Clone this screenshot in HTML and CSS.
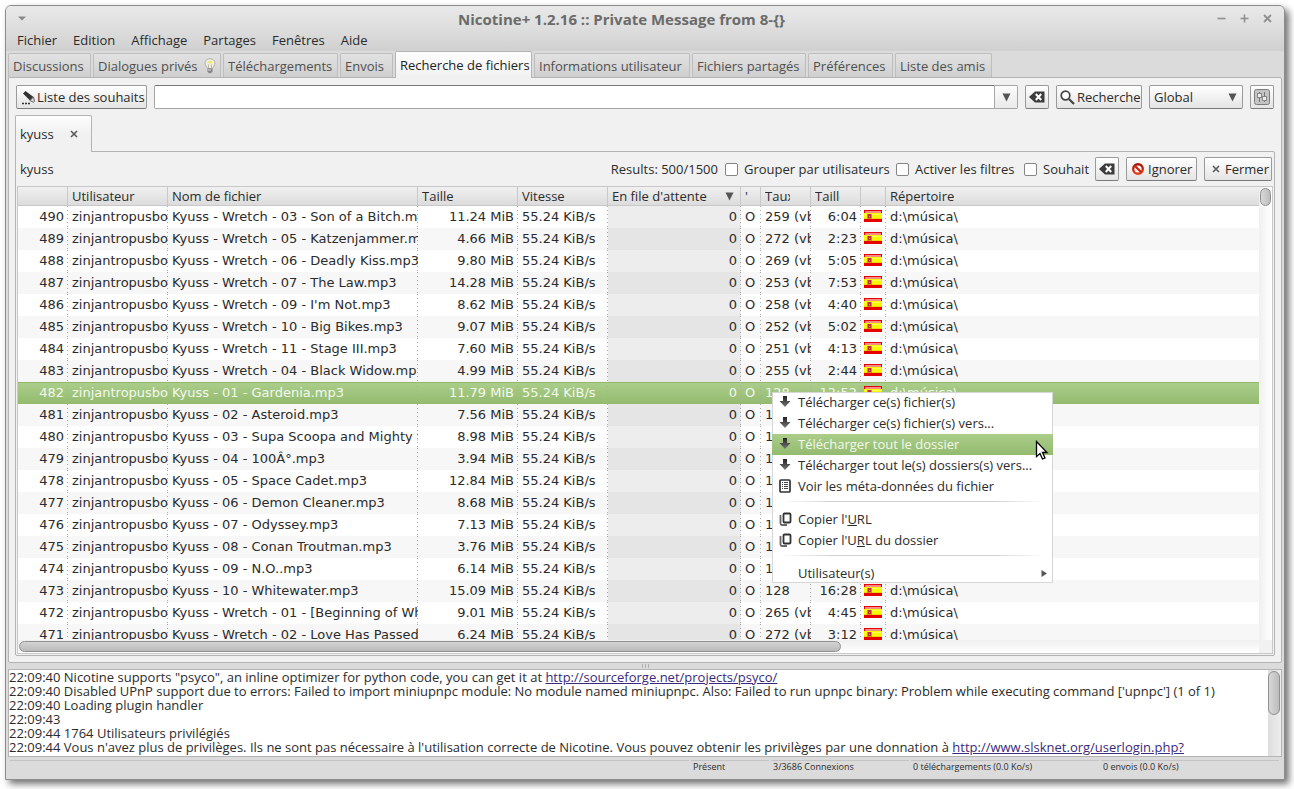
FILE: index.html
```html
<!DOCTYPE html>
<html lang="fr">
<head>
<meta charset="utf-8">
<title>Nicotine+ 1.2.16</title>
<link rel="stylesheet" href="styles.css">
</head>
<body>
<svg width="0" height="0" class="defs" aria-hidden="true">
  <defs>
    <linearGradient id="g-dark" x1="0" y1="0" x2="0" y2="1"><stop offset="0" stop-color="#222"/><stop offset="1" stop-color="#777"/></linearGradient>
    <linearGradient id="g-red" x1="0" y1="0" x2="0" y2="1"><stop offset="0" stop-color="#a80f05"/><stop offset="1" stop-color="#e8401c"/></linearGradient>
    <symbol id="flag" viewBox="0 0 18 12">
      <rect width="18" height="12" fill="#e60000"/><rect x="1" y="1" width="16" height="2" fill="#f58a8a"/>
      <rect y="3" width="18" height="6" fill="#f8f800"/><rect x="1" y="4" width="16" height="1" fill="#ffff4d"/><rect y="8" width="18" height="1" fill="#e8d800"/>
      <rect x="3" y="4" width="5" height="5" fill="#d8862a"/><rect x="4" y="4" width="3" height="4" fill="#c03040"/><rect x="5" y="6" width="1" height="1" fill="#99a0c8"/>
    </symbol>
    <symbol id="arrow" viewBox="0 0 12 12"><path d="M4 0h4v5h3.500L6 11 .5 5H4z" fill="url(#g-dark)"/></symbol>
    <symbol id="copy" viewBox="0 0 13 14"><rect x="4.500" y="1.500" width="7" height="9" rx="1" fill="#fff" stroke="#333" stroke-width="1.800"/><path d="M1.500 3v8.500a1.500 1.500 0 0 0 1.500 1.500h5" fill="none" stroke="#666" stroke-width="1.800"/></symbol>
    <symbol id="erase" viewBox="0 0 16 12"><path d="M0 6 6 .5h9.500v11H6z" fill="#3c3c3c"/><path d="M6.800 3l5.400 6M12.200 3l-5.400 6" stroke="#fff" stroke-width="2"/></symbol>
    <symbol id="down" viewBox="0 0 9 9"><path d="M.5.5h8l-4 8z" fill="#555"/></symbol>
    <symbol id="cross" viewBox="0 0 8 8"><path d="M1 1l6 6M7 1 1 7" stroke="#5a5a5a" stroke-width="1.600"/></symbol>
  </defs>
</svg>

<div class="window">
  <header class="titlebar">
    <svg class="win-menu" width="8" height="5" viewBox="0 0 8 5"><path d="M0 .5h8L4 4.500z" fill="#8a8a8a"/></svg>
    <h1 class="title">Nicotine+ 1.2.16 :: Private Message from 8-{}</h1>
    <div class="win-controls">
      <svg width="9" height="9" viewBox="0 0 9 9"><path d="M.5 4.500h8" stroke="#8f8f8f" stroke-width="1.600"/></svg>
      <svg width="9" height="9" viewBox="0 0 9 9"><path d="M.5 4.500h8M4.500.5v8" stroke="#8f8f8f" stroke-width="1.600"/></svg>
      <svg width="9" height="9" viewBox="0 0 9 9"><path d="M1 1l7 7M8 1 1 8" stroke="#8f8f8f" stroke-width="1.800"/></svg>
    </div>
  </header>

  <nav class="menubar">
    <button>Fichier</button><button>Edition</button><button>Affichage</button><button>Partages</button><button>Fenêtres</button><button>Aide</button>
  </nav>

  <div class="tabs" role="tablist">
    <button class="tab t-disc" role="tab">Discussions</button>
    <button class="tab t-priv" role="tab">Dialogues privés
      <svg width="12" height="16" viewBox="0 0 12 16"><path d="M6 .7C3 .7 1 2.800 1 5.300c0 2.200 2 3.500 2.500 5.200h5C9 8.800 11 7.500 11 5.300 11 2.800 9 .7 6 .7z" fill="#efeed8" stroke="#a5a59c" stroke-width=".8"/><path d="M4 4c1-1.500 3-1.500 4 0L6.500 5.500h-1z" fill="#f3e34e"/><path d="M4.500 6.500v4M7.500 6.500v4" stroke="#aaa" stroke-width=".8"/><path d="M3.500 10.500h5V14L6 15.500 3.500 14z" fill="#858585"/><path d="M4 12h3" stroke="#ddd"/></svg>
    </button>
    <button class="tab t-tele" role="tab">Téléchargements</button>
    <button class="tab t-env" role="tab">Envois</button>
    <button class="tab t-rech active" role="tab" aria-selected="true">Recherche de fichiers</button>
    <button class="tab t-info" role="tab">Informations utilisateur</button>
    <button class="tab t-part" role="tab">Fichiers partagés</button>
    <button class="tab t-pref" role="tab">Préférences</button>
    <button class="tab t-amis" role="tab">Liste des amis</button>
  </div>

  <main class="notebook">
    <form class="searchbar">
      <button type="button" class="btn wish">
        <svg width="15" height="15" viewBox="0 0 15 15"><path d="M2 3.500 4.500 1l8 6-3.500 3.500z" fill="#333"/><path d="M9 10.500 12.500 7l1 4.500-1 .8z" fill="#ddd" stroke="#555" stroke-width=".9"/><path d="M1 13.500h8" stroke="#333" stroke-width="1.400" stroke-dasharray="2 1"/></svg>
        Liste des souhaits</button>
      <div class="combo">
        <input type="text" aria-label="Recherche de fichiers">
        <button type="button" aria-label="Historique"><svg width="9" height="9"><use href="#down"/></svg></button>
      </div>
      <button type="button" class="btn icon" aria-label="Effacer"><svg width="16" height="12"><use href="#erase"/></svg></button>
      <button type="button" class="btn search">
        <svg width="15" height="15" viewBox="0 0 15 15"><circle cx="5.500" cy="5.500" r="4.300" fill="#fff" stroke="#444" stroke-width="1.700"/><path d="M9 9l5 5" stroke="#444" stroke-width="2.200"/></svg>
        Recherche</button>
      <div class="selectbox">
        <select aria-label="Portée"><option>Global</option></select>
        <svg width="9" height="9"><use href="#down"/></svg>
      </div>
      <button type="button" class="btn icon" aria-label="Options">
        <svg width="16" height="16" viewBox="0 0 16 16"><rect x=".5" y=".5" width="15" height="15" rx="2" fill="#c4c4c4" stroke="#7c7c7c"/><path d="M5.500 3v10M10.500 3v10" stroke="#777"/><rect x="3.500" y="4.500" width="4" height="4" fill="#eee" stroke="#888"/><rect x="8.500" y="7.500" width="4" height="4" fill="#eee" stroke="#888"/></svg>
      </button>
    </form>

    <div class="subtab">kyuss <button aria-label="Fermer l'onglet"><svg width="8" height="8"><use href="#cross"/></svg></button></div>

    <section class="panel">
      <div class="filters">
        <span class="term">kyuss</span>
        <span>Results: 500/1500</span>
        <label class="f-group"><input type="checkbox">Grouper par utilisateurs</label>
        <label class="f-filter"><input type="checkbox">Activer les filtres</label>
        <label class="f-wish"><input type="checkbox">Souhait</label>
        <button class="btn icon" aria-label="Effacer"><svg width="16" height="12"><use href="#erase"/></svg></button>
        <button class="btn ignore"><svg width="12" height="12" viewBox="0 0 12 12"><circle cx="6" cy="6" r="4.800" fill="#fff" stroke="url(#g-red)" stroke-width="2.400"/><path d="M2.500 2.500l7 7" stroke="#c92812" stroke-width="2.400"/></svg>Ignorer</button>
        <button class="btn close"><svg width="8" height="8"><use href="#cross"/></svg>Fermer</button>
      </div>

      <div class="results">
        <div class="viewport">
          <table>
            <colgroup><col class="c50"><col class="c100"><col class="c250"><col class="c100"><col class="c90"><col class="c133"><col class="c20"><col class="c50"><col class="c50"><col class="c25"><col></colgroup>
            <thead><tr><th></th><th>Utilisateur</th><th>Nom de fichier</th><th>Taille</th><th>Vitesse</th><th><div class="sort">En file d'attente<svg width="9" height="9"><use href="#down"/></svg></div></th><th>'</th><th><div class="cut">Taux</div></th><th><div class="cut">Taille</div></th><th></th><th>Répertoire</th></tr></thead>
            <tbody>
              <tr><td>490</td><td>zinjantropusbo</td><td>Kyuss - Wretch - 03 - Son of a Bitch.m</td><td>11.24 MiB</td><td>55.24 KiB/s</td><td>0</td><td>O</td><td>259 (vb</td><td>6:04</td><td><svg><use href="#flag"/></svg></td><td>d:\música\</td></tr>
              <tr><td>489</td><td>zinjantropusbo</td><td>Kyuss - Wretch - 05 - Katzenjammer.m</td><td>4.66 MiB</td><td>55.24 KiB/s</td><td>0</td><td>O</td><td>272 (vb</td><td>2:23</td><td><svg><use href="#flag"/></svg></td><td>d:\música\</td></tr>
              <tr><td>488</td><td>zinjantropusbo</td><td>Kyuss - Wretch - 06 - Deadly Kiss.mp3</td><td>9.80 MiB</td><td>55.24 KiB/s</td><td>0</td><td>O</td><td>269 (vb</td><td>5:05</td><td><svg><use href="#flag"/></svg></td><td>d:\música\</td></tr>
              <tr><td>487</td><td>zinjantropusbo</td><td>Kyuss - Wretch - 07 - The Law.mp3</td><td>14.28 MiB</td><td>55.24 KiB/s</td><td>0</td><td>O</td><td>253 (vb</td><td>7:53</td><td><svg><use href="#flag"/></svg></td><td>d:\música\</td></tr>
              <tr><td>486</td><td>zinjantropusbo</td><td>Kyuss - Wretch - 09 - I'm Not.mp3</td><td>8.62 MiB</td><td>55.24 KiB/s</td><td>0</td><td>O</td><td>258 (vb</td><td>4:40</td><td><svg><use href="#flag"/></svg></td><td>d:\música\</td></tr>
              <tr><td>485</td><td>zinjantropusbo</td><td>Kyuss - Wretch - 10 - Big Bikes.mp3</td><td>9.07 MiB</td><td>55.24 KiB/s</td><td>0</td><td>O</td><td>252 (vb</td><td>5:02</td><td><svg><use href="#flag"/></svg></td><td>d:\música\</td></tr>
              <tr><td>484</td><td>zinjantropusbo</td><td>Kyuss - Wretch - 11 - Stage III.mp3</td><td>7.60 MiB</td><td>55.24 KiB/s</td><td>0</td><td>O</td><td>251 (vb</td><td>4:13</td><td><svg><use href="#flag"/></svg></td><td>d:\música\</td></tr>
              <tr><td>483</td><td>zinjantropusbo</td><td>Kyuss - Wretch - 04 - Black Widow.mp</td><td>4.99 MiB</td><td>55.24 KiB/s</td><td>0</td><td>O</td><td>255 (vb</td><td>2:44</td><td><svg><use href="#flag"/></svg></td><td>d:\música\</td></tr>
              <tr class="selected"><td>482</td><td>zinjantropusbo</td><td>Kyuss - 01 - Gardenia.mp3</td><td>11.79 MiB</td><td>55.24 KiB/s</td><td>0</td><td>O</td><td>128</td><td>12:52</td><td><svg><use href="#flag"/></svg></td><td>d:\música\</td></tr>
              <tr><td>481</td><td>zinjantropusbo</td><td>Kyuss - 02 - Asteroid.mp3</td><td>7.56 MiB</td><td>55.24 KiB/s</td><td>0</td><td>O</td><td>128</td><td></td><td></td><td></td></tr>
              <tr><td>480</td><td>zinjantropusbo</td><td>Kyuss - 03 - Supa Scoopa and Mighty S</td><td>8.98 MiB</td><td>55.24 KiB/s</td><td>0</td><td>O</td><td>128</td><td></td><td></td><td></td></tr>
              <tr><td>479</td><td>zinjantropusbo</td><td>Kyuss - 04 - 100Â°.mp3</td><td>3.94 MiB</td><td>55.24 KiB/s</td><td>0</td><td>O</td><td>128</td><td></td><td></td><td></td></tr>
              <tr><td>478</td><td>zinjantropusbo</td><td>Kyuss - 05 - Space Cadet.mp3</td><td>12.84 MiB</td><td>55.24 KiB/s</td><td>0</td><td>O</td><td>128</td><td></td><td></td><td></td></tr>
              <tr><td>477</td><td>zinjantropusbo</td><td>Kyuss - 06 - Demon Cleaner.mp3</td><td>8.68 MiB</td><td>55.24 KiB/s</td><td>0</td><td>O</td><td>128</td><td></td><td></td><td></td></tr>
              <tr><td>476</td><td>zinjantropusbo</td><td>Kyuss - 07 - Odyssey.mp3</td><td>7.13 MiB</td><td>55.24 KiB/s</td><td>0</td><td>O</td><td>128</td><td></td><td></td><td></td></tr>
              <tr><td>475</td><td>zinjantropusbo</td><td>Kyuss - 08 - Conan Troutman.mp3</td><td>3.76 MiB</td><td>55.24 KiB/s</td><td>0</td><td>O</td><td>128</td><td></td><td></td><td></td></tr>
              <tr><td>474</td><td>zinjantropusbo</td><td>Kyuss - 09 - N.O..mp3</td><td>6.14 MiB</td><td>55.24 KiB/s</td><td>0</td><td>O</td><td>128</td><td></td><td></td><td></td></tr>
              <tr><td>473</td><td>zinjantropusbo</td><td>Kyuss - 10 - Whitewater.mp3</td><td>15.09 MiB</td><td>55.24 KiB/s</td><td>0</td><td>O</td><td>128</td><td>16:28</td><td><svg><use href="#flag"/></svg></td><td>d:\música\</td></tr>
              <tr><td>472</td><td>zinjantropusbo</td><td>Kyuss - Wretch - 01 - [Beginning of Wh</td><td>9.01 MiB</td><td>55.24 KiB/s</td><td>0</td><td>O</td><td>265 (vb</td><td>4:45</td><td><svg><use href="#flag"/></svg></td><td>d:\música\</td></tr>
              <tr><td>471</td><td>zinjantropusbo</td><td>Kyuss - Wretch - 02 - Love Has Passed</td><td>6.24 MiB</td><td>55.24 KiB/s</td><td>0</td><td>O</td><td>272 (vb</td><td>3:12</td><td><svg><use href="#flag"/></svg></td><td>d:\música\</td></tr>
            </tbody>
          </table>
        </div>
        <div class="vscroll"><div class="thumb"></div></div>
        <div class="hscroll"><div class="thumb"></div></div>
        <div class="corner"></div>
      </div>
    </section>
  </main>

  <div class="pane-handle"><i></i><i></i><i></i></div>

  <section class="log">
    <div class="lines">
      <p>22:09:40 Nicotine supports "psyco", an inline optimizer for python code, you can get it at <a href="http://sourceforge.net/projects/psyco/">http://sourceforge.net/projects/psyco/</a></p>
      <p>22:09:40 Disabled UPnP support due to errors: Failed to import miniupnpc module: No module named miniupnpc. Also: Failed to run upnpc binary: Problem while executing command ['upnpc'] (1 of 1)</p>
      <p>22:09:40 Loading plugin handler</p>
      <p>22:09:43</p>
      <p>22:09:44 1764 Utilisateurs privilégiés</p>
      <p>22:09:44 Vous n'avez plus de privilèges. Ils ne sont pas nécessaire à l'utilisation correcte de Nicotine. Vous pouvez obtenir les privilèges par une donnation à <a href="http://www.slsknet.org/userlogin.php?">http://www.slsknet.org/userlogin.php?</a></p>
    </div>
    <div class="log-scroll"><div class="thumb"></div></div>
  </section>

  <footer class="status"><span></span><span>Présent</span><span>3/3686 Connexions</span><span>0 téléchargements (0.0 Ko/s)</span><span>0 envois (0.0 Ko/s)</span></footer>

  <div class="context" role="menu">
    <button role="menuitem"><svg width="12" height="12"><use href="#arrow"/></svg>Télécharger ce(s) fichier(s)</button>
    <button role="menuitem"><svg width="12" height="12"><use href="#arrow"/></svg>Télécharger ce(s) fichier(s) vers...</button>
    <button role="menuitem" class="hover"><svg width="12" height="12"><use href="#arrow"/></svg>Télécharger tout le dossier</button>
    <button role="menuitem"><svg width="12" height="12"><use href="#arrow"/></svg>Télécharger tout le(s) dossiers(s) vers...</button>
    <button role="menuitem"><svg width="12" height="14" viewBox="0 0 12 14"><rect x="1" y="1" width="10" height="12" rx="1" fill="#fff" stroke="#333" stroke-width="1.700"/><path d="M3 3.500h1m1 0h4M3 5.500h1m1 0h4M3 7.500h1m1 0h4M3 9.500h1m1 0h4" stroke="#444"/></svg>Voir les méta-données du fichier</button>
    <hr>
    <button role="menuitem"><svg width="13" height="14"><use href="#copy"/></svg><span>Copier l'<u>U</u>RL</span></button>
    <button role="menuitem"><svg width="13" height="14"><use href="#copy"/></svg><span>Copier l'U<u>R</u>L du dossier</span></button>
    <hr>
    <button role="menuitem" class="sub">Utilisateur(s)<svg class="more" width="6" height="7" viewBox="0 0 6 7"><path d="M.5 0 6 3.500.5 7z" fill="#555"/></svg></button>
  </div>
  <svg class="pointer" width="14" height="21" viewBox="0 0 14 21"><path d="M1.500 1.500v15l3.500-3 2.500 5.500 2.500-1-2.500-5.500h4.500z" fill="#fff" stroke="#000" stroke-width="1.300"/></svg>
</div>
</body>
</html>
```
FILE: styles.css
```css
* { box-sizing: border-box; }

body {
  margin: 0;
  height: 100vh;
  padding: 5px 9px 9px 5px;
  background: #fff;
  color: #2b2b2b;
  font: 13px/16px "Open Sans", "Noto Sans", sans-serif;
  white-space: nowrap;
}
button, input, select { font: inherit; color: inherit; margin: 0; }
button { padding: 0; border: 0; background: none; }
svg { flex: none; }
.defs { position: absolute; }

.window {
  position: relative;
  display: flex;
  flex-direction: column;
  height: 100%;
  border: 1px solid #8c8c8c;
  border-radius: 6px 6px 0 0;
  background: #dbdbdb;
  box-shadow: 4px 4px 7px rgba(0, 0, 0, .55);
}

/* Title and menus */
.titlebar {
  display: flex;
  align-items: center;
  height: 25px;
  padding: 0 12px;
  border-radius: 5px 5px 0 0;
  background: linear-gradient(#e9e9e9, #dcdcdc);
}
.title {
  flex: 1;
  margin: 0;
  text-align: center;
  font-size: 15px;
  line-height: 20px;
  color: #6b6b6b;
}
.win-controls { display: flex; gap: 14px; }
.menubar {
  display: flex;
  gap: 16px;
  height: 20px;
  padding: 0 11px 2px;
  background: linear-gradient(#dcdcdc, #d0d0d0);
}

/* Main tabs */
.tabs {
  display: flex;
  align-items: flex-end;
  gap: 2px;
  height: 26px;
  padding: 0 2px;
}
.tab {
  display: flex;
  align-items: center;
  justify-content: space-between;
  height: 24px;
  padding: 0 4px;
  border: 1px solid #bdbdbd;
  border-bottom: 0;
  border-radius: 2px 2px 0 0;
  background: linear-gradient(#e2e2e2, #cfcfcf);
  color: #505050;
}
.tab.active {
  position: relative;
  z-index: 1;
  height: 27px;
  margin-bottom: -1px;
  padding-right: 0;
  border-color: #b4b4b4;
  background: linear-gradient(#fdfdfd, #f1f1f1);
  color: #222;
}
.t-disc { width: 83px; }
.t-priv { width: 128px; }
.t-tele { width: 115px; }
.t-env { width: 53px; }
.t-rech { width: 137px; }
.t-info { width: 156px; }
.t-part { width: 114px; }
.t-pref { width: 85px; }
.t-amis { width: 97px; }

.notebook {
  flex: 1;
  min-height: 0;
  display: flex;
  flex-direction: column;
  margin: 0 2px;
  padding: 7px 6px 6px;
  border: 1px solid #b4b4b4;
  border-radius: 0 2px 2px 2px;
  background: #f1f1f1;
}

/* Buttons and fields */
.btn {
  display: flex;
  align-items: center;
  height: 24px;
  gap: 4px;
  padding: 0 5px;
  border: 1px solid #9a9a9a;
  border-bottom-color: #7c7c7c;
  border-radius: 2px;
  background: linear-gradient(#fff, #e4e4e4);
}
.btn.icon { width: 24px; padding: 0; justify-content: center; }
.wish { width: 131px; gap: 1px; padding: 0 4px; }
.search { width: 86px; gap: 2px; padding: 0 3px; }
.ignore { width: 71px; }
.close { width: 68px; gap: 5px; padding: 0 7px; }
.searchbar { display: flex; gap: 7px; padding: 0 1px; }
.combo { flex: 1; display: flex; height: 24px; }
.combo input {
  flex: 1;
  min-width: 0;
  border: 1px solid #a6a6a6;
  border-top-color: #777;
  border-radius: 2px 0 0 2px;
  background: #fff;
  padding: 0 5px;
}
.combo button {
  display: grid;
  place-items: center;
  width: 23px;
  border: 1px solid #a6a6a6;
  border-left: 0;
  border-radius: 0 2px 2px 0;
  background: linear-gradient(#fcfcfc, #eaeaea);
}
.selectbox { display: grid; width: 94px; height: 24px; align-items: center; }
.selectbox > * { grid-area: 1 / 1; }
.selectbox select {
  appearance: none;
  width: 100%;
  height: 24px;
  padding: 0 4px;
  border: 1px solid #9a9a9a;
  border-bottom-color: #7c7c7c;
  border-radius: 2px;
  background: linear-gradient(#fff, #e4e4e4);
}
.selectbox svg { justify-self: end; margin-right: 6px; pointer-events: none; }

/* Search result tab */
.subtab {
  position: relative;
  z-index: 1;
  align-self: flex-start;
  display: flex;
  align-items: center;
  justify-content: space-between;
  width: 77px;
  height: 37px;
  margin: 6px 0 -1px;
  padding: 0 13px 0 4px;
  border: 1px solid #b4b4b4;
  border-bottom: 0;
  border-radius: 2px 2px 0 0;
  background: linear-gradient(#fdfdfd, #f1f1f1 50%);
}
.subtab button { display: flex; }
.panel {
  flex: 1;
  min-height: 0;
  display: flex;
  flex-direction: column;
  padding: 5px 1px 1px;
  border: 1px solid #b4b4b4;
  border-radius: 0 2px 2px 2px;
}
.filters { display: flex; align-items: center; gap: 7px; padding: 0 1px 0 3px; }
.term { flex: 1; }
.filters label { display: flex; align-items: center; gap: 6px; }
.f-group { width: 164px; }
.f-filter { width: 121px; }
.f-wish { width: 64px; }
.filters input {
  appearance: none;
  flex: none;
  width: 13px;
  height: 13px;
  border: 1px solid #858585;
  border-radius: 2px;
  background: #fff;
}

/* Results table */
.results {
  flex: 1;
  min-height: 0;
  display: grid;
  grid-template: minmax(0, 1fr) 13px / minmax(0, 1fr) 13px;
  margin-top: 5px;
  border: 1px solid #c8c8c8;
  background: #fff;
}
.viewport { overflow: hidden; }
table { width: 100%; table-layout: fixed; border-collapse: separate; border-spacing: 0; }
.c20 { width: 20px; }
.c25 { width: 25px; }
.c50 { width: 50px; }
.c90 { width: 90px; }
.c100 { width: 100px; }
.c133 { width: 133px; }
.c250 { width: 250px; }
th, td { overflow: hidden; padding: 0 4px; text-align: left; text-overflow: clip; }
th {
  height: 19px;
  line-height: 18px;
  font-weight: 400;
  border-right: 1px solid #c9c9c9;
  border-bottom: 1px solid #c9c9c9;
  background: linear-gradient(#f0f0f0, #dcdcdc);
}
th:last-child { border-right: 0; }
.sort { display: flex; align-items: center; justify-content: space-between; padding-right: 2px; }
.cut { width: 25px; overflow: hidden; }
td {
  height: 22px;
  font: 13px/22px "DejaVu Sans", sans-serif;
  padding-right: 0;
  background: linear-gradient(#aaa 1px, transparent 1px) right top / 1px 4px repeat-y;
}
td:last-child { background: none; }
td:nth-child(1), td:nth-child(4), td:nth-child(6), td:nth-child(9) { text-align: right; padding-right: 4px; }
td:nth-child(6) { background-color: #ededed; }
td:nth-child(10) { padding: 0 3px; }
td svg { display: block; width: 18px; height: 12px; margin-bottom: 2px; }
tbody tr:nth-child(even) { background: #f7f7f7; }
tbody tr:nth-child(even) td:nth-child(6) { background-color: #e5e5e5; }
tbody .selected { background: linear-gradient(#8fb86b 1px, #abcd8a 1px, #93bb6f); color: #f3f8ee; }
tbody .selected td:nth-child(6) { background-color: transparent; }

.vscroll { padding: 1px; background: linear-gradient(90deg, #f0f0f0, #fff); }
.hscroll { padding: 1px 0 0 1px; background: linear-gradient(#f0f0f0, #fff); }
.corner { background: #f1f1f1; }
.thumb {
  border: 1px solid #909090;
  border-radius: 6px;
  background: linear-gradient(90deg, #d8d8d8, #bcbcbc);
}
.vscroll .thumb { height: 18px; }
.hscroll .thumb { width: 66.3%; height: 11px; background: linear-gradient(#d4d4d4, #bababa); }

/* Log and status */
.pane-handle { display: flex; justify-content: center; align-items: center; gap: 2px; height: 6px; }
.pane-handle i { width: 1px; height: 4px; background: #b0b0b0; }
.log {
  display: flex;
  height: 88px;
  margin: 0 2px;
  border: 1px solid #b4b4b4;
  background: #fff;
}
.lines { flex: 1; min-width: 0; overflow: hidden; line-height: 14px; }
.lines p { margin: 0; }
.lines a { color: #3a2a7c; }
.log-scroll { width: 13px; padding: 1px 0; background: linear-gradient(90deg, #dedede, #ededed); }
.log-scroll .thumb { height: 44px; margin-right: 1px; }
.status {
  display: grid;
  grid-template-columns: minmax(0, 1fr) 78px 138px 188px 178px;
  gap: 2px;
  height: 22px;
  padding: 3px 5px 0 4px;
  font-size: 9px;
  line-height: 12px;
}
.status span { border-top: 1px solid #c4c4c4; padding-left: 2px; height: 14px; }

/* Context menu floating above the list */
.context {
  position: absolute;
  left: 766px;
  top: 386px;
  width: 281px;
  background: #fff;
  box-shadow: inset 0 0 0 1px #d6d6d6;
}
.context button {
  display: grid;
  grid-template-columns: 19px 1fr;
  align-items: center;
  width: 100%;
  height: 21px;
  padding: 0 0 1px 7px;
  text-align: left;
}
.context hr { height: 1px; margin: 4px 8px 7px; border: 0; background: linear-gradient(90deg, transparent, #d0d0d0 20% 80%, transparent); }
.context .hover { background: linear-gradient(#abcd8a, #93bb6f); color: #f3f8ee; }
.context .sub { grid-template-columns: 1fr 6px; height: 20px; padding: 0 6px 0 26px; }
.pointer { position: absolute; left: 1029px; top: 434px; }
```
